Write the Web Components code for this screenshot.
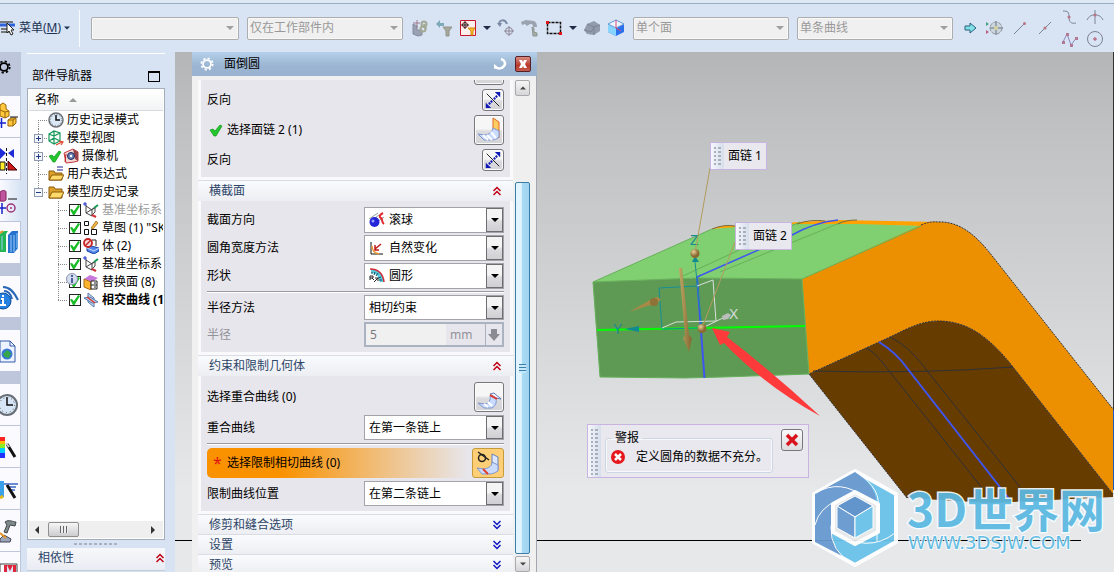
<!DOCTYPE html>
<html lang="zh-CN">
<head>
<meta charset="utf-8">
<title>面倒圆</title>
<style>
    html, body { height: 100%; }
    body {
        margin: 0;
        overflow: hidden;
        font: 12px/18px "Noto Sans", "Noto Sans CJK SC", sans-serif;
        color: #000;
        background: #d7e3f3;
    }
</style>
</head>
<body>
<nx-app></nx-app>
<script>
(function() {
    const ICONS = {
        menu: ['0 0 16 16', '<path d="M0 2h13M1 9h12M1 12h9" stroke="#555" stroke-width="1.5"/><path d="M0 5h15" stroke="#2e63dc" stroke-width="3"/><path d="M7 3v10l2-2 2 4 2-1-2-4h3z" fill="#fff" stroke="#222"/>'],
        caret: ['0 0 8 8', '<path d="M0 2h8L4 6z" fill="currentColor"/>'],
        link: ['0 0 18 18', '<path d="M2 5l4 2v4h5v5l-4 1-5-2z" fill="#9aa1b2" stroke="#858ca0"/><path d="M6 1v8M2 4h7" stroke="#a07d90"/><g fill="none" stroke="#a3a895" stroke-width="2"><circle cx="13" cy="5" r="2.5"/><circle cx="12" cy="10" r="2.5"/><path d="M13 5l2 5"/></g>'],
        filter: ['0 0 18 18', '<path d="M1 5l4-4v3h4v3H5v2z" fill="#7daab9"/><path d="M8 8h9l-3 4v5h-3v-5z" fill="#a6a79b" stroke="#93958d"/>'],
        snap: ['0 0 18 18', '<path d="M1.500 1.500h15v15h-15z" fill="#fbf0ee" stroke="#c9142b"/><circle cx="6" cy="6" r="2.500" fill="none" stroke="#711"/><path d="M2 6h8M6 2v8" stroke="#222"/><path d="M9 9h7l-2 3v4h-2v-4z" fill="#ffbd2e" stroke="#d48b0c"/>'],
        orbit: ['0 0 18 18', '<path d="M2 6C2 0 8 0 10 5" fill="none" stroke="#7b8ba5" stroke-width="2"/><path d="M0 4l3 4 2-4z" fill="#7b8ba5"/><circle cx="12" cy="12" r="3.500" fill="none" stroke="#8d8796"/><path d="M7 12h10M12 7v10" stroke="#8d8796"/>'],
        pull: ['0 0 18 18', '<path d="M0 3l5-2 8 1c2 1 3 3 3 6h-4c0-3-1-3-3-3L6 7 4 5 1 6z" fill="#9aa3af"/><path d="M11 8l2 1v4l3 1v3h-4z" fill="#a5ab9e" stroke="#8d9795"/>'],
        marquee: ['0 0 18 18', '<path d="M2.500 3.500h13v11h-13z" fill="none" stroke="#111" stroke-width="1.500" stroke-dasharray="3 1"/><path d="M1 2h3v3H1zM14 13h3v3h-3z" fill="#e31717"/>'],
        face: ['0 0 18 18', '<path d="M1 11l3-6 7-3 6 4v6l-6 4-7-1z" fill="#929baa"/><path d="M4 5l7 3 6-2M11 8v8M1 11l7 2 3-5" fill="none" stroke="#7c8596"/>'],
        cube: ['0 0 18 18', '<path d="M9 1l8 4v8l-8 4-8-4V5z" fill="#2b71ee"/><path d="M1 5l8 4v8l-8-4z" fill="#87d4ff"/><path d="M9 1l8 4-8 4-8-4z" fill="#edf6ff" stroke="#6b9ed2"/><path d="M9 9V1M9 9l5 3" stroke="#d5467a" fill="none"/>'],
        arrow: ['0 0 18 18', '<path d="M4 7h5V4l6 5-6 5v-3H4z" fill="#80e2e6" stroke="#28617f"/>'],
        wheel: ['0 0 18 18', '<circle cx="10" cy="9" r="6" fill="#cbd6dc" stroke="#8b93a0" stroke-dasharray="4 1"/><path d="M10 2v14M4 9h13" stroke="#8b93a0" stroke-width="1.500"/><circle cx="10" cy="9" r="2" fill="#d5d39d"/><path d="M0 3v4l3-2z" fill="#48a07d"/><path d="M0 11v4l3-2z" fill="#c06080"/>'],
        endpoint: ['0 0 18 18', '<path d="M3 15L13 5" stroke="#7b8494"/><circle cx="13.500" cy="4.500" r="1.500" fill="#b87484"/>'],
        midpoint: ['0 0 18 18', '<path d="M3 15L15 3" stroke="#7b8494"/><circle cx="9" cy="9" r="1.500" fill="#b87484"/>'],
        curve: ['0 0 18 18', '<path d="M2 3c5 0 6 1 6 6s2 7 7 6" fill="none" stroke="#7b8494"/><circle cx="8" cy="9" r="1.500" fill="#b87484"/>'],
        spline: ['0 0 18 18', '<path d="M2 12L6 4l4 11 6-8" fill="none" stroke="#8c87bd"/><path d="M1 11h3v3H1zM5 3h3v3H5zM9 14h3v3H9zM14 7h3v3h-3z" fill="#b07a94"/>'],
        cross: ['0 0 18 18', '<path d="M9 2v14M1 12c3-7 13-7 16 0" fill="none" stroke="#7b8494"/><circle cx="9" cy="7" r="1.500" fill="#b87484"/>'],
        center: ['0 0 18 18', '<circle cx="9" cy="9" r="7.500" fill="none" stroke="#7b8494"/><path d="M7 9h4M9 7v4" stroke="#b05268"/>'],
        gear: ['0 0 16 16', '<circle cx="8" cy="8" r="6.500" fill="none" stroke="currentColor" stroke-width="2" stroke-dasharray="2.550 2.550"/><circle cx="8" cy="8" r="4.500" fill="none" stroke="currentColor" stroke-width="2"/>'],
        reset: ['0 0 14 14', '<path d="M8 2c4 1 5 5 3 7-2 3-6 3-9 1" fill="none" stroke="#fff" stroke-width="2.500"/><path d="M1 7v5l4-2z" fill="#fff"/>'],
        close: ['0 0 14 14', '<path d="M3 3h3l1 2 1-2h3L9 7l2 4H8L7 9l-1 2H3l2-4z" fill="#fff"/>'],
        flip: ['0 0 20 20', '<path d="M3 3l14 14" stroke="#111"/><path d="M11 9l4-4M9 11l-4 4" stroke="#1019b5" stroke-width="2.500" stroke-dasharray="2 1"/><path d="M18 1v6l-6-6zM2 19v-6l6 6z" fill="#1019b5"/>'],
        chain: ['0 0 28 28', '<path d="M18 2l6 4v16l-6-5z" fill="#fccb62" stroke="#dd6a22"/><path d="M3 18l7 1c5-1 7-3 8-7l6 3v6c-3 3-6 3-9 3H9z" fill="#c9dbff" stroke="#7f95cc"/><path d="M8 19l5 5M12 19l5 5M16 16l5 6" stroke="#fff" stroke-width="2"/>'],
        coincide: ['0 0 28 28', '<path d="M3 20l7 1c4-1 6-4 5-8l6 3c1 4-1 7-4 9H9z" fill="#c9dbff" stroke="#7f95cc"/><path d="M9 21l4 3M13 19l4 4" stroke="#fff" stroke-width="2"/><path d="M15 11l4-1 7 6-5-1z" fill="#eef3ff" stroke="#667fba"/><path d="M15 12l7 4" stroke="#e6392d" stroke-width="2"/>'],
        tangent: ['0 0 28 28', '<path d="M18 5l6 3v13l-6-4z" fill="#dce8ff" stroke="#667fba"/><path d="M3 19l7 1c5-1 8-3 8-7l6 3v6c-3 2-6 3-9 3H8z" fill="#c9dbff" stroke="#7f95cc"/><path d="M9 20l5 5" stroke="#e43b2b" stroke-width="2"/><circle cx="8" cy="9" r="3.500" fill="none" stroke="#222" stroke-width="1.500"/><path d="M4 3l11 8" stroke="#222" stroke-width="1.500"/>'],
        ball: ['0 0 16 16', '<path d="M0 7l9-6M8 10l7-5M2 9l8-6" stroke="#90a0a0"/><path d="M14 1c-4 2-4 4-2 5s0 4 3 6" fill="none" stroke="#e02a2f" stroke-width="2"/><circle cx="5.500" cy="10" r="5" fill="#2424d8"/><circle cx="4" cy="9" r="1.500" fill="#98a6ff"/>'],
        natural: ['0 0 16 16', '<path d="M2 2v12h12" fill="none" stroke="#111"/><path d="M3 6c0 5 3 7 7 8" fill="none" stroke="#ef9a32" stroke-width="1.500"/><path d="M12 4L6 9M6 5v5h4" fill="none" stroke="#c01919" stroke-width="1.500"/>'],
        arc: ['0 0 16 16', '<path d="M2 3c7 0 10 4 11 11" fill="none" stroke="#55c9da" stroke-width="4"/><path d="M1 1c9 0 13 5 14 13" fill="none" stroke="#d12d39" stroke-width="1.500"/><path d="M2 5h2M6 4l-1 3M9 5L7 8M12 9l-3 1M13 12h-3" stroke="#154f68"/><path d="M1 12V8h3v2H1M3 10l2 2M5 14l4-4M6 10h3v3" fill="none" stroke="#222"/>'],
        down: ['0 0 12 12', '<path d="M3 0h6v5h3l-6 7-6-7h3z" fill="#8b8b94"/>'],
        tick: ['0 0 14 14', '<path d="M1 7l3-1 2 2 5-6 2 1-6 10H5z" fill="#22c72c" stroke="#11931b" stroke-width=".7"/>'],
        chevrons: ['0 0 10 10', '<path d="M1.500 5L5 1.500 8.500 5M1.500 9L5 5.500 8.500 9" fill="none" stroke="currentColor" stroke-width="1.500"/>'],
        clock: ['0 0 16 16', '<circle cx="8" cy="8" r="7" fill="#dce9f7" stroke="#6a6f76" stroke-width="1.500"/><path d="M8 3v5h4" fill="none" stroke="#111" stroke-width="1.500"/><circle cx="8" cy="8" r="5.500" fill="none" stroke="#777" stroke-dasharray="1 1.880"/>'],
        views: ['0 0 16 16', '<path d="M1 4l5-3 6 2v8l-6 3-5-3zM1 4l5 2 6-3M6 1v13M1 11l5-3 6 3" fill="none" stroke="#16985b" stroke-width="1.200"/><path d="M8 15l6-3M11 11l4 1-2 3" fill="none" stroke="#e6442c" stroke-width="1.200"/>'],
        camera: ['0 0 16 16', '<path d="M1 5l9-4 5 3v9l-4 1-8 1z" fill="#f6d8d8" stroke="#c63838"/><path d="M10 1l5 3v9l-3-2z" fill="#99434c"/><circle cx="8" cy="8" r="3.500" fill="#697fb7" stroke="#222a55"/><circle cx="8" cy="8" r="1.200" fill="#fff"/><path d="M2 14l1-8" stroke="#b22"/>'],
        folder: ['0 0 16 16', '<path d="M1 3h5l1 2h7v9H1z" fill="#dca129" stroke="#8a5a0b"/><path d="M4 8h12l-3 6H1z" fill="#ffd96a" stroke="#8a5a0b"/>'],
        expr: ['0 0 16 16', '<path d="M1 5h5l1 2h7v7H1z" fill="#dca129" stroke="#8a5a0b"/><path d="M4 9h12l-3 5H1z" fill="#ffd96a" stroke="#8a5a0b"/><path d="M9 1h6M9 4h6" stroke="#1c1c90"/>'],
        csys: ['0 0 16 16', '<path d="M3 3v8l6 3V8L3 4M3 11l8-5M8 8l4-2v4l-4 4" fill="none" stroke="#444"/><path d="M2 0v4M0 2h4" stroke="#2230d0"/><path d="M11 6l4-3" stroke="#1a9955" stroke-width="2"/><path d="M9 13l4 2" stroke="#d22d38" stroke-width="2"/>'],
        sketch: ['0 0 16 16', '<path d="M1.500 1.500h4v4h-4zM1.500 9.500h4v5h-4zM8.500 9.500h5v5h-5z" fill="#fff" stroke="#111"/><path d="M8 8l5-7 2 2-5 6z" fill="#f3b53e" stroke="#8b5b16" stroke-width=".7"/>'],
        body: ['0 0 16 16', '<path d="M4 10l4-2 8 2v3l-5 3-7-3z" fill="#4f86ed" stroke="#1d3fa3"/><path d="M4 10l7 3 5-3" fill="none" stroke="#cde"/><path d="M9 2h4v6" fill="none" stroke="#222"/><circle cx="5" cy="5" r="4" fill="#f5d9d9" stroke="#c52525" stroke-width="1.800"/><path d="M2 8l6-6" stroke="#c52525" stroke-width="1.500"/>'],
        replace: ['0 0 16 16', '<path d="M1 5l6-4 8 3-6 4z" fill="#c777d9"/><path d="M1 5l7 3v8l-7-3z" fill="#ffb42e" stroke="#ad6d16"/><path d="M8 7h6v8H8z" fill="#fff" stroke="#222"/><path d="M8 11h6M11 9h2M11 13h2" stroke="#222"/>'],
        intersect: ['0 0 16 16', '<path d="M5 1l6 5v9l-6-5z" fill="#c6d8f0" stroke="#5379ac"/><path d="M1 6l6-1 8 5-6 1z" fill="#b8d0ef" stroke="#5379ac"/><path d="M4 5l8 6" stroke="#e13a30" stroke-width="1.500"/>'],
        info: ['0 0 12 12', '<circle cx="6" cy="6" r="5.500" fill="#d4dcef" stroke="#8a94ac"/><path d="M6 2v2M6 5v5" stroke="#233379" stroke-width="1.500"/>'],
        error: ['0 0 16 16', '<circle cx="8" cy="8" r="7" fill="#e5171d"/><path d="M5 5l6 6M11 5l-6 6" stroke="#fff" stroke-width="2.500"/>'],
        redx: ['0 0 16 16', '<path d="M3 3l10 10M13 3L3 13" stroke="#d8141e" stroke-width="3.500"/>'],
        rBoxes: ['0 0 20 41', '<path d="M0 9l3-2 3 2v4l3 2v5l-4 2-5-2z" fill="#ffc83d" stroke="#98640a"/><path d="M0 14l5 2 4-1M5 16v6" fill="none" stroke="#98640a"/><path d="M8 24l3-2h5v5l-3 3H8z" fill="#ffc83d" stroke="#98640a"/><path d="M8 24h5l3-2M13 24v6" fill="none" stroke="#98640a"/><path d="M0 27h6M1.500 22v10" stroke="#1723cb" stroke-width="1.500"/><path d="M10 21h8" stroke="#111"/>'],
        rMirror: ['0 0 20 41', '<path d="M0 10l6 5-6 6zM14 11v9l-6-5z" fill="#1f2bd6"/><path d="M6.500 10v26" stroke="#111" stroke-dasharray="3 2"/><path d="M0 24h5v8H0z" fill="#ffec2b" stroke="#111"/><path d="M8 23v9h9z" fill="#cf1b1b" stroke="#400"/>'],
        rDatum: ['0 0 20 41', '<path d="M0 12c2-2 6-2 6 0v8c-2 2-6 1-6 1z" fill="#bf559c" stroke="#84235f"/><path d="M0 28h6M2 23v11" stroke="#1723cb" stroke-width="1.500"/><path d="M8 19h9" stroke="#111"/><circle cx="11" cy="28" r="4" fill="none" stroke="#9a347a" stroke-width="1.500"/><circle cx="11" cy="28" r="1" fill="#9a347a"/>'],
        rBooks: ['0 0 20 41', '<path d="M0 12l4-3h4l-2 3v18H0z" fill="#22b455"/><path d="M8 13l4-4h6v17l-4 5H8z" fill="#2672cf"/><path d="M11 13v17M14 13v17M2 14v14M17 11v15" stroke="#9bcdf5"/><path d="M0 11l3-2" stroke="#e8922a" stroke-width="2"/>'],
        rWifi: ['0 0 20 41', '<circle cx="3" cy="25" r="8" fill="#2481e2" stroke="#105099"/><path d="M3 19v2M1 23h2v6M0 29h6" stroke="#fff" stroke-width="2"/><path d="M4 15c5 0 7 4 8 8M3 11c7 0 11 5 15 13" fill="none" stroke="#2868b8" stroke-width="2"/>'],
        rPage: ['0 0 20 41', '<path d="M0 11h10l5 5v16H0z" fill="#edf4ff" stroke="#345aa9"/><path d="M10 11v5h5" fill="none" stroke="#345aa9"/><circle cx="7" cy="24" r="5.500" fill="#3978d2"/><path d="M3 24l4-4 4 3-2 5-4-1z" fill="#36a748"/>'],
        rClock: ['0 0 20 41', '<circle cx="7" cy="21" r="10" fill="#d7e5f6" stroke="#676d75" stroke-width="2"/><path d="M7 13v8h6" fill="none" stroke="#111" stroke-width="1.500"/><circle cx="7" cy="21" r="7.500" fill="none" stroke="#555" stroke-dasharray="1 2.930"/>'],
        rColor: ['0 0 20 41', '<path d="M0 11h5v5H0z" fill="#f22"/><path d="M0 15h5v4H0z" fill="#fb0"/><path d="M0 18h5v5H0z" fill="#8e2"/><path d="M0 22h5v5H0z" fill="#0cf"/><path d="M0 27h5v5H0z" fill="#23f"/><path d="M7 18l8 13" stroke="#111" stroke-width="3"/><path d="M6 17l3 4" stroke="#ccc" stroke-width="2"/>'],
        rTable: ['0 0 20 41', '<path d="M0 13h4v16H0z" fill="#3aa0e8"/><path d="M4 16h14M7 19h9M10 22h5" stroke="#3a67c4" stroke-width="1.500"/><path d="M7 17l8 13" stroke="#111" stroke-width="3"/><path d="M0 30l3-2" stroke="#e7b61c" stroke-width="3"/>'],
        rTool: ['0 0 20 41', '<path d="M5 12c4-3 8 0 11 0l-1 4-5-1-3 8-3-1 3-7z" fill="#7e8b8b" stroke="#444"/><path d="M0 29l4-4 7 4-1 3H0z" fill="#9aa6b8" stroke="#445"/><path d="M0 23l6 5" stroke="#e39421" stroke-width="2"/>'],
        rFrame: ['0 0 20 41', '<path d="M0 12h17v18H0z" fill="#fff" stroke="#444"/><path d="M4 13h12v16H4z" fill="#e0243a"/><path d="M7 13l3 6 3-6v16H7z" fill="#d8e8ff"/>']
    };

    function define(name, html, setup) {
        const tmpl = document.createElement('template');
        tmpl.innerHTML = '<style>* { box-sizing: border-box; }</style>' + html;
        customElements.define(name, class extends HTMLElement {
            constructor() {
                super();
                this.attachShadow({ mode: 'open' }).appendChild(tmpl.content.cloneNode(true));
            }
            connectedCallback() {
                if (setup) setup.call(this, this.shadowRoot);
            }
        });
    }

    // width and height come from whoever places the icon
    define('nx-icon', `
        <style>
            :host { display: block; flex: none; width: 16px; height: 16px; }
            svg { display: block; width: 100%; height: 100%; }
        </style>
        <svg aria-hidden="true"></svg>
    `, function(root) {
        const icon = ICONS[this.getAttribute('name')];
        const svg = root.querySelector('svg');
        svg.setAttribute('viewBox', icon[0]);
        svg.innerHTML = icon[1];
    });

    define('tool-combo', `
        <style>
            :host { display: grid; flex: 0 1 156px; height: 23px; align-items: center; color: #a0a0a0; }
            select, nx-icon { grid-area: 1 / 1; }
            select {
                appearance: none; width: 100%; height: 23px; padding: 0 2px;
                border: 1px solid #adadad; border-radius: 2px; background: #f0f0f0;
                box-shadow: inset 0 0 0 1px #f8f8f8;
                font: inherit; color: #999; opacity: 1;
            }
            nx-icon { justify-self: end; width: 8px; height: 8px; margin-right: 5px; pointer-events: none; }
        </style>
        <select disabled><option></option></select>
        <nx-icon name="caret"></nx-icon>
    `, function(root) {
        root.querySelector('option').textContent = this.getAttribute('value') || '';
        root.querySelector('select').setAttribute('aria-label', this.getAttribute('label'));
    });

    define('tool-bar', `
        <style>
            :host {
                display: flex; align-items: center; flex: none; height: 52px; padding-top: 4px;
                background: linear-gradient(#dfe9f6 3px, #9aabc6 3px, #9aabc6 4px, #d8e3f3 4px);
            }
            button { font: inherit; color: inherit; border: 0; padding: 0; background: none; }
            .menu { display: flex; align-items: center; gap: 3px; width: 72px; flex: none; color: #1c3354; white-space: nowrap; }
            .menu nx-icon:last-child { width: 6px; height: 6px; }
            .sep { width: 1px; height: 37px; margin: 0 11px 0 7px; background: #f8fbff; flex: none; }
            .icons { display: flex; align-items: center; gap: 6px; margin: 0 8px; flex: none; }
            .icons button > nx-icon { width: 18px; height: 18px; }
            .icons > nx-icon { width: 8px; height: 8px; color: #222c48; }
            .points { gap: 7px; }
            .stack { display: grid; gap: 4px; }
            .first { flex-basis: 148px; margin-right: 8px; }
        </style>
        <button class="menu"><nx-icon name="menu"></nx-icon><span>菜单(<u>M</u>)</span><nx-icon name="caret"></nx-icon></button>
        <span class="sep"></span>
        <tool-combo class="first" label="类型过滤器"></tool-combo>
        <tool-combo label="选择范围" value="仅在工作部件内"></tool-combo>
        <div class="icons">
            <button><nx-icon name="link"></nx-icon></button>
            <button><nx-icon name="filter"></nx-icon></button>
            <button><nx-icon name="snap"></nx-icon></button>
            <nx-icon name="caret"></nx-icon>
            <button><nx-icon name="orbit"></nx-icon></button>
            <button><nx-icon name="pull"></nx-icon></button>
            <button><nx-icon name="marquee"></nx-icon></button>
            <nx-icon name="caret"></nx-icon>
            <button><nx-icon name="face"></nx-icon></button>
            <button><nx-icon name="cube"></nx-icon></button>
        </div>
        <tool-combo label="面规则" value="单个面" style="margin-right: 8px"></tool-combo>
        <tool-combo label="曲线规则" value="单条曲线"></tool-combo>
        <div class="icons points">
            <button><nx-icon name="arrow"></nx-icon></button>
            <button><nx-icon name="wheel"></nx-icon></button>
            <button><nx-icon name="endpoint"></nx-icon></button>
            <button><nx-icon name="midpoint"></nx-icon></button>
            <div class="stack">
                <button><nx-icon name="curve"></nx-icon></button>
                <button><nx-icon name="spline"></nx-icon></button>
            </div>
            <div class="stack">
                <button><nx-icon name="cross"></nx-icon></button>
                <button><nx-icon name="center"></nx-icon></button>
            </div>
        </div>
    `);

    define('resource-rail', `
        <style>
            :host { display: flex; flex-direction: column; flex: none; width: 21px; background: #bdc6db; overflow: hidden; }
            .gear { width: 14px; height: 14px; margin: 8px 0 22px -3px; }
            button {
                flex: none; width: 20px; height: 41px; margin-bottom: 1px; padding: 0; border: 0; background: #fafaff;
            }
            .active { background: linear-gradient(90deg, #fafaff, #d7e3f3); width: 21px; }
            .apart { margin-bottom: 13px; }
            button nx-icon { width: 20px; height: 41px; }
        </style>
        <nx-icon class="gear" name="gear"></nx-icon>
        <button><nx-icon name="rBoxes"></nx-icon></button>
        <button><nx-icon name="rMirror"></nx-icon></button>
        <button class="active"><nx-icon name="rDatum"></nx-icon></button>
        <button class="apart"><nx-icon name="rBooks"></nx-icon></button>
        <button class="apart"><nx-icon name="rWifi"></nx-icon></button>
        <button class="apart"><nx-icon name="rPage"></nx-icon></button>
        <button><nx-icon name="rClock"></nx-icon></button>
        <button><nx-icon name="rColor"></nx-icon></button>
        <button><nx-icon name="rTable"></nx-icon></button>
        <button><nx-icon name="rTool"></nx-icon></button>
        <button><nx-icon name="rFrame"></nx-icon></button>
    `);

    define('tree-row', `
        <style>
            :host { display: flex; align-items: center; height: 18px; white-space: nowrap; }
            :host([child]) { padding-left: 20px; }
            :host([dim]) { color: #9c9c9c; }
            :host([bold]) { font-weight: bold; }
            .guide { flex: none; width: 20px; height: 18px; }
            label { display: flex; align-items: center; }
            .icon { margin-right: 3px; }
            .pre { margin-right: 1px; width: 14px; height: 14px; }
            input {
                appearance: none; display: grid; place-items: center; flex: none;
                width: 12px; height: 12px; margin: 0 2px 0 1px; border: 1px solid #222; background: #fff;
            }
            input::before {
                content: ""; width: 10px; height: 10px; background: #18bd25;
                clip-path: polygon(0 45%, 20% 40%, 38% 62%, 82% 0, 100% 10%, 45% 100%, 30% 100%);
            }
            .info { width: 12px; height: 12px; margin: -6px -10px 0 -2px; z-index: 1; }
        </style>
        <svg class="guide" aria-hidden="true"></svg>
        <label></label>
    `, function(root) {
        const mark = this.getAttribute('mark');
        const end = this.getAttribute('end');
        const from = end === 'top' ? 9 : 0;
        const to = end === 'bottom' ? 9 : 18;
        let guide = `<path d="M10.500 ${from}V${to}M10 9.500H20" stroke="#888" stroke-dasharray="1 1"/>`;
        if (mark) {
            guide += '<rect x="6.500" y="5.500" width="8" height="8" fill="#f4f6fa" stroke="#8f9bb0"/>'
                + `<path d="M8 9.500h5${mark === 'plus' ? 'M10.500 7v5' : ''}" stroke="#223b88"/>`;
        }
        root.querySelector('svg').innerHTML = guide;
        root.querySelector('label').innerHTML =
            (this.hasAttribute('info') ? '<nx-icon class="info" name="info"></nx-icon>' : '')
            + (this.hasAttribute('child') ? '<input type="checkbox" checked>' : '')
            + (this.hasAttribute('tick') ? '<nx-icon class="pre" name="tick"></nx-icon>' : '')
            + `<nx-icon class="icon" name="${this.getAttribute('icon')}"></nx-icon><span>${this.getAttribute('text')}</span>`;
    });

    define('part-navigator', `
        <style>
            :host {
                display: flex; flex-direction: column; flex: none; width: 154px;
                padding: 1px 10px 0 6px; background: #d7e3f3; overflow: hidden;
            }
            header { display: flex; align-items: center; justify-content: space-between; height: 35px; flex: none;
                padding: 10px 5px 0; border-top: 1px solid #fff; }
            .max { width: 12px; height: 11px; padding: 0; border: 1px solid #000; border-top-width: 2px; background: none; }
            .tree { display: flex; flex-direction: column; flex: 1; min-height: 0; border: 1px solid #a5adb8; background: #fff; padding: 1px; overflow: hidden; }
            .head { display: flex; align-items: center; gap: 10px; height: 21px; flex: none; padding-left: 6px;
                background: linear-gradient(#fff, #f2f3f5); border-bottom: 1px solid #d8dade; }
            .head i { border: 4px solid transparent; border-top: 0; border-bottom-color: #999; }
            .rows { flex: 1; overflow: hidden; margin-left: -1px; }
            .scroll { display: flex; align-items: center; height: 17px; flex: none; background: #efefef; padding: 0 8px 0 6px; }
            .scroll b { width: 31px; height: 15px; margin: 0 auto 0 9px; border: 1px solid #8f8f8f; border-radius: 2px;
                background: repeating-linear-gradient(90deg, #666 0 1px, #eee 1px 3px) center / 8px 7px no-repeat, linear-gradient(#f6f6f6, #cdcdd0); }
            .scroll i { border: 4px solid transparent; border-left: 0; border-right-color: #333; }
            .scroll i + b + i { border-left: 4px solid #333; border-right: 0; }
            .grip { height: 2px; width: 44px; margin: 3px auto; flex: none;
                background: repeating-linear-gradient(90deg, #aab2c2 0 3px, transparent 3px 5px); }
            .more { display: flex; align-items: center; justify-content: space-between; height: 23px; flex: none;
                padding: 0 0 3px 11px; border: 0; border-bottom: 1px solid #c5ccd8; margin-bottom: 1px;
                background: linear-gradient(#f7f8fb, #e9ecf3); font: inherit; color: #2d4568; }
            .more nx-icon { width: 10px; height: 10px; color: #c00015; }
        </style>
        <header><span>部件导航器</span><button class="max" aria-label="最大化"></button></header>
        <div class="tree">
            <div class="head"><span>名称</span><i></i></div>
            <div class="rows">
                <tree-row end="top" icon="clock" text="历史记录模式"></tree-row>
                <tree-row mark="plus" icon="views" text="模型视图"></tree-row>
                <tree-row mark="plus" tick icon="camera" text="摄像机"></tree-row>
                <tree-row icon="expr" text="用户表达式"></tree-row>
                <tree-row mark="minus" end="bottom" icon="folder" text="模型历史记录"></tree-row>
                <tree-row child dim icon="csys" text="基准坐标系"></tree-row>
                <tree-row child icon="sketch" text='草图 (1) "SK'></tree-row>
                <tree-row child icon="body" text="体 (2)"></tree-row>
                <tree-row child icon="csys" text="基准坐标系"></tree-row>
                <tree-row child info icon="replace" text="替换面 (8)"></tree-row>
                <tree-row child bold end="bottom" icon="intersect" text="相交曲线 (1"></tree-row>
            </div>
            <div class="scroll"><i></i><b></b><i></i></div>
        </div>
        <div class="grip"></div>
        <button class="more"><span>相依性</span><nx-icon name="chevrons"></nx-icon></button>
    `);

    define('icon-button', `
        <style>
            :host { display: block; flex: none; }
            button {
                display: grid; place-items: center; width: 30px; height: 30px; padding: 0;
                border: 1px solid #77777c; border-radius: 3px;
                background: linear-gradient(#f6f6f6 45%, #dcdcdf 55%, #d4d4d8);
                box-shadow: inset 0 0 0 1px #fbfbfb;
            }
            nx-icon { width: 28px; height: 28px; }
            :host([small]) button { width: 22px; height: 22px; }
            :host([small]) nx-icon { width: 18px; height: 18px; }
            :host([hot]) button { width: 32px; border-color: #c79a3a; background: #ffcf78; box-shadow: none; }
        </style>
        <button></button>
    `, function(root) {
        root.querySelector('button').innerHTML = `<nx-icon name="${this.getAttribute('icon')}"></nx-icon>`;
    });

    define('action-row', `
        <style>
            :host { display: flex; align-items: center; justify-content: space-between; }
            span { display: flex; align-items: center; gap: 4px; }
            nx-icon { width: 14px; height: 14px; margin-left: 2px; }
            b { width: 16px; padding-left: 6px; font-size: 16px; font-weight: normal; color: #e01313; }
            :host([required]) { border-radius: 5px; background: linear-gradient(90deg, #fa9200 25%, #e7e6ec 88%); }
        </style>
        <span><slot name="mark"></slot><slot></slot></span>
        <slot name="button"></slot>
    `, function(root) {
        const mark = root.querySelector('slot[name=mark]');
        if (this.hasAttribute('tick')) mark.innerHTML = '<nx-icon name="tick"></nx-icon>';
        if (this.hasAttribute('required')) mark.innerHTML = '<b>*</b>';
    });

    define('field-row', `
        <style>
            :host { display: flex; align-items: center; justify-content: space-between; height: 25px; }
            :host([icon]) { height: 26px; }
            .box { display: grid; align-items: center; width: 140px; height: 100%; }
            select, .icon, .drop { grid-area: 1 / 1; }
            select { appearance: none; width: 100%; height: 100%; padding: 0 4px; border: 1px solid #a3a3a9;
                border-radius: 0; background: #fff; font: inherit; color: #000; }
            :host([icon]) select { padding-left: 24px; }
            .icon, .drop { pointer-events: none; }
            .icon { margin-left: 5px; }
            .drop { justify-self: end; display: grid; place-items: center; width: 17px; height: calc(100% - 2px); margin-right: 1px;
                border: 1px solid #6e6e72; background: linear-gradient(#f4f4f4 45%, #dcdcdf 55%, #d0d0d4); }
            .drop nx-icon { width: 8px; height: 8px; }
        </style>
        <label for="value"></label>
        <div class="box">
            <select id="value"><option></option></select>
            <span class="drop"><nx-icon name="caret"></nx-icon></span>
        </div>
    `, function(root) {
        root.querySelector('label').textContent = this.getAttribute('label');
        root.querySelector('option').textContent = this.getAttribute('value');
        if (this.hasAttribute('icon')) {
            root.querySelector('select').insertAdjacentHTML('afterend',
                `<nx-icon class="icon" name="${this.getAttribute('icon')}"></nx-icon>`);
        }
    });

    define('radius-row', `
        <style>
            :host { display: flex; align-items: center; justify-content: space-between; height: 25px; color: #92929a; }
            .box { display: flex; align-items: center; width: 140px; height: 100%; border: 2px solid #abb3c0; }
            input { width: 80px; height: 100%; padding: 0 4px; border: 0; background: #f0f0f0; font: inherit; color: #77777d; }
            .unit { flex: 1; padding-left: 4px; }
            button { display: grid; place-items: center; width: 17px; height: 100%; padding: 0; border: 0; border-left: 1px solid #abb3c0; background: #e7e6ec; }
            nx-icon { width: 12px; height: 12px; }
        </style>
        <label for="radius">半径</label>
        <div class="box">
            <input id="radius" value="5" disabled><span class="unit">mm</span>
            <button disabled><nx-icon name="down"></nx-icon></button>
        </div>
    `);

    define('dialog-section', `
        <style>
            :host { display: block; flex: none; background: #fafafc; }
            header { border-top: 1px solid #dadbe3; }
            header button {
                display: flex; align-items: center; justify-content: space-between; width: 100%; height: 19px;
                padding: 0 11px; border: 0; font: inherit; color: #2d4568;
                background: linear-gradient(#fafbfd, #eceef3);
            }
            nx-icon { width: 10px; height: 10px; color: #1017c0; transform: rotate(180deg); }
            :host([open]) header button { height: 20px; }
            :host([open]) nx-icon { color: #c00015; transform: none; }
            .content { display: none; flex-direction: column; gap: var(--row-gap, 2px); margin: 0 3px; padding: 6px 6px 5px;
                background: #e7e6ec; }
            :host([open]) .content { display: flex; }
            :host([open]) { padding-bottom: 3px; }
            :host(:not([heading])) header { display: none; }
            :host(:not([heading])) .content { padding-top: 0; padding-bottom: 6px; }
        </style>
        <header><button><span></span><nx-icon name="chevrons"></nx-icon></button></header>
        <div class="content"><slot></slot></div>
    `, function(root) {
        root.querySelector('header span').textContent = this.getAttribute('heading') || '';
    });

    define('scroll-bar', `
        <style>
            :host { display: flex; flex-direction: column; flex: none; width: 15px; background: #efefef; }
            span { display: grid; place-items: center; height: 16px; flex: none; border: 1px solid #a9a9ad; border-radius: 2px;
                background: linear-gradient(#f6f6f6, #d6d6d9); }
            nx-icon { width: 6px; height: 6px; color: #444; }
            .up { transform: rotate(180deg); }
            .thumb { flex: 1; min-height: 20px; margin: 86px 0 2px; border: 1px solid #3d7ea8; border-radius: 2px;
                background: repeating-linear-gradient(#3b7fa8 0 1px, #c5e9fb 1px 3px) center / 7px 9px no-repeat,
                    linear-gradient(90deg, #e2f4fd 40%, #a9dbf5 50%, #a0d3f0); }
        </style>
        <span><nx-icon class="up" name="caret"></nx-icon></span>
        <div class="thumb"></div>
        <span><nx-icon name="caret"></nx-icon></span>
    `);

    define('blend-dialog', `
        <style>
            :host { display: flex; flex-direction: column; width: 345px; height: 100%; margin-left: 17px;
                background: #f0f0f0; box-shadow: inset -1px 0 #a4a8ae; overflow: hidden; position: relative; }
            header { display: flex; align-items: center; height: 24px; flex: none; padding: 0 6px 0 8px;
                background: linear-gradient(#b5d0ea, #9ab4d1 60%, #9ab3d0); }
            header nx-icon { color: #fff; width: 14px; height: 14px; }
            header span { flex: 1; padding-left: 10px; }
            .close { display: grid; place-items: center; width: 16px; height: 16px; margin-left: 8px; padding: 0;
                border: 1px solid #55202a; border-radius: 2px; background: linear-gradient(#d98d80, #b8382c 60%, #c45a4a); }
            main { display: flex; flex: 1; min-height: 0; padding: 4px 7px 0 6px; gap: 2px; }
            .list { display: flex; flex-direction: column; flex: 1; overflow: hidden; }
            .cut { display: flex; justify-content: flex-end; align-items: flex-end; height: 5px; overflow: hidden; }
            hr { width: 100%; height: 2px; margin: 0; border: 0; border-top: 1px solid #9b9ba2; background: #fff; }
        </style>
        <header>
            <nx-icon name="gear"></nx-icon><span>面倒圆</span><nx-icon name="reset"></nx-icon>
            <button class="close" aria-label="关闭"><nx-icon name="close"></nx-icon></button>
        </header>
        <main>
            <div class="list">
                <dialog-section open style="--row-gap: 4px">
                    <div class="cut"><icon-button icon="caret"></icon-button></div>
                    <action-row>反向<icon-button slot="button" small icon="flip"></icon-button></action-row>
                    <action-row tick>选择面链 2 (1)<icon-button slot="button" icon="chain"></icon-button></action-row>
                    <action-row>反向<icon-button slot="button" small icon="flip"></icon-button></action-row>
                </dialog-section>
                <dialog-section open heading="横截面">
                    <field-row label="截面方向" icon="ball" value="滚球"></field-row>
                    <field-row label="圆角宽度方法" icon="natural" value="自然变化"></field-row>
                    <field-row label="形状" icon="arc" value="圆形"></field-row>
                    <hr>
                    <field-row label="半径方法" value="相切约束"></field-row>
                    <radius-row></radius-row>
                </dialog-section>
                <dialog-section open heading="约束和限制几何体" style="--row-gap: 3px">
                    <action-row>选择重合曲线 (0)<icon-button slot="button" icon="coincide"></icon-button></action-row>
                    <field-row label="重合曲线" value="在第一条链上"></field-row>
                    <hr>
                    <action-row required>选择限制相切曲线 (0)<icon-button slot="button" hot icon="tangent"></icon-button></action-row>
                    <field-row label="限制曲线位置" value="在第二条链上"></field-row>
                </dialog-section>
                <dialog-section heading="修剪和缝合选项"></dialog-section>
                <dialog-section heading="设置"></dialog-section>
                <dialog-section heading="预览"></dialog-section>
            </div>
            <scroll-bar></scroll-bar>
        </main>
    `);

    define('drag-tag', `
        <style>
            :host { display: flex; border: 1px solid #c9b3e0; background: #e9e8ee; white-space: nowrap; }
            .grip { width: 13px; flex: none; padding: 2px 1px 2px 3px; background: linear-gradient(90deg, #f6f7fb, #d5deeb); }
            .grip i { display: block; height: 100%;
                background: conic-gradient(#a9b0bd 25%, transparent 0) -3px 2px / 5px 4px; }
            .text { padding: 4px; }
        </style>
        <span class="grip"><i></i></span><div class="text"><slot></slot></div>
    `);

    define('alert-box', `
        <style>
            drag-tag { width: 222px; height: 54px; }
            .row { display: flex; align-items: flex-start; gap: 8px; }
            fieldset { display: flex; align-items: center; gap: 10px; width: 168px; height: 44px; margin: 0; padding: 0 4px 6px;
                border: 1px solid #ccd7e2; border-radius: 3px; box-shadow: inset 0 0 0 1px #f6f8fb; }
            legend { margin-left: 2px; padding: 0 3px; line-height: 18px; }
            button { display: grid; place-items: center; width: 22px; height: 22px; padding: 0; border: 1px solid #77777c;
                border-radius: 3px; background: linear-gradient(#fafafa, #dcdce0); }
        </style>
        <drag-tag><div class="row">
            <fieldset><legend>警报</legend><nx-icon name="error"></nx-icon><span>定义圆角的数据不充分。</span></fieldset>
            <button aria-label="关闭"><nx-icon name="redx"></nx-icon></button>
        </div></drag-tag>
    `);

    define('model-scene', `
        <style>
            :host { display: block; }
            svg { display: block; width: 100%; height: 100%; }
            .edge { fill: none; stroke: #303038; stroke-width: 1; }
            .soft { fill: none; stroke: #66b05a; stroke-width: 1; }
            .blue { fill: none; stroke: #3f55f0; stroke-width: 2; }
            .mark { font-family: "Noto Sans CJK SC", sans-serif; font-weight: 700; font-size: 46px; }
            .url { font-family: "DejaVu Sans", sans-serif; font-size: 18px; stroke-width: 2; }
            .axis { font-family: "Liberation Sans", sans-serif; font-size: 14px; }
        </style>
        <svg viewBox="175 52 939 520" preserveAspectRatio="xMinYMin slice">
            <defs>
                <linearGradient id="bg" x2="0" y2="1">
                    <stop offset="0" stop-color="#b4b5b6"/><stop offset=".15" stop-color="#c0c1c3"/><stop offset=".67" stop-color="#dddee0"/>
                    <stop offset=".85" stop-color="#e6e8ea"/><stop offset="1" stop-color="#e6e8ea"/>
                </linearGradient>
                <radialGradient id="bead" cx=".35" cy=".3"><stop offset="0" stop-color="#ecd09a"/><stop offset="1" stop-color="#8a6a31"/></radialGradient>
                <linearGradient id="cone"><stop offset="0" stop-color="#c2a865"/><stop offset="1" stop-color="#806630"/></linearGradient>
            </defs>
            <rect x="175" y="52" width="939" height="520" fill="url(#bg)"/>
            <path d="M175 540.500H1081" stroke="#000"/>
            <!-- bent plate -->
            <path d="M712 229Q720 225 735 226L800 222 840 220 938 222 921 226 800 224z" fill="#ffa200"/>
            <path d="M593 282L712 229 736 227 795 224 860 224 921 226 802 279 698 278z" fill="#80cf70"/>
            <path d="M593 282L698 278 802 279 809 374 723 377 685 378 600 377z" fill="#5f9a55"/>
            <path d="M802 279L921 225Q930 221 938 222C960 221 977 236 993 257L1113 409V494L1013 367C985 331 962 321 938 321 920 321 905 330 890 337L809 374z" fill="#ec8f00"/>
            <path d="M809 374L890 337C905 330 920 321 938 321 962 321 985 331 1013 367L1113 494V497L990 503 907 498z" fill="#663c00"/>
            <path class="edge" stroke-dasharray="2 1" d="M921 225Q930 221 938 222C960 221 977 236 993 257L1113 409M907 498L809 374 890 337C905 330 920 321 938 321 962 321 985 331 1013 367L1113 494"/>
            <path class="edge" d="M813 371Q920 374 1013 367M866 348C876 353 882 362 890 372L982 488M890 337C907 346 917 357 928 372L1020 487"/>
            <path class="soft" d="M712 229L593 282 698 278 802 279 921 226M593 282L600 377 685 378 723 377 809 374 802 279M683 276L800 222M720 272L842 222"/>
            <path d="M712 229Q724 224 735 226M797 224Q810 219 825 221M838 224Q845 220 857 220" fill="none" stroke="#7a6a3a"/>
            <path class="blue" d="M879 342C892 350 900 358 907 368L1010 500"/>
            <path d="M597 330L701 328 805 326" fill="none" stroke="#0f0" stroke-width="2"/>
            <path class="blue" d="M704.500 378L697 277"/>
            <path d="M697 277L790 236Q815 222 838 220" fill="none" stroke="#3f55f0" stroke-width="1.500"/>
            <!-- datum axes -->
            <path d="M697 286L659 288 662 329 701 328M695 262L702 328" fill="none" stroke="#178e96"/>
            <path d="M697 286L713 280 716 321 676 322 662 328M702 328L725 317" fill="none" stroke="#d9dfdb"/>
            <path d="M722 316l6-3 3 2-3 4-5 1z" fill="#bbbdbd"/>
            <path d="M625 329L639 326V332zM692 262L695 256 699 262z" fill="#118a90"/>
            <text class="axis" x="729" y="319" fill="#d5dcda">X</text>
            <text class="axis" x="613" y="334" fill="#168b91">Y</text>
            <text class="axis" x="690" y="245" fill="#168b91">Z</text>
            <path d="M710 168L695 253M735 242L702 328" stroke="#b39b5e"/>
            <path d="M629 312L650 300 657 297 661 299 657 304 647 306z" fill="#a98946"/>
            <circle cx="654" cy="302" r="4" fill="#8f7237"/>
            <path d="M679 268L682 268 689 335 692 338 689 352 683 338 685 335z" fill="url(#cone)"/>
            <circle cx="695" cy="253.500" r="4.500" fill="url(#bead)"/><circle cx="702" cy="328.500" r="4.500" fill="url(#bead)"/>
            <path d="M712 328L730 332 727 337Q775 374 820 416 765 386 724 343L720 345z" fill="#ff3a3a"/>
            <path d="M1113.500 52V410" stroke="#333"/><path d="M1113.500 410V490" stroke="#1c5ab8"/>
            <!-- site badge -->
            <g opacity=".95" stroke="#fff" stroke-linejoin="round">
                <path d="M855 471L896 494V542L855 565 814 542V494z" fill="#6ac3ea" stroke-width="4"/>
                <path d="M855 472L815 494V542L842 556Q830 541 833 532V506L855 493 876 505Q878 487 855 472z" fill="#6799d0" stroke="none"/>
                <path d="M816 493Q840 478 866 498M855 471Q884 490 877 511V541M895 533Q868 554 833 532M843 557Q826 541 833 515M815 525Q819 508 838 500" fill="none"/>
                <path d="M855 492L878 504V532L855 544 833 532V504z" fill="#e6e8ea" stroke="#fff" stroke-width="4"/>
                <path d="M855 496L873 506 855 517 837 506z" fill="#5d91cc"/>
                <path d="M837 506L855 517V538L837 528z" fill="#6799d0"/>
                <path d="M855 517L873 506V528L855 538z" fill="#6ac3ea"/>
            </g>
            <g fill="#5bb9e3" stroke="#f4fbff" stroke-width="3" paint-order="stroke" opacity=".93">
                <text class="mark" x="907" y="527">3D世界网</text>
                <text class="url" x="908" y="549">WWW.3DSJW.COM</text>
            </g>
        </svg>
    `);

    define('graphics-window', `
        <style>
            :host { display: block; position: relative; flex: 1; min-width: 0; overflow: hidden; }
            model-scene { position: absolute; inset: 0; }
            drag-tag, alert-box { position: absolute; }
            .one { left: 535px; top: 90px; }
            .two { left: 560px; top: 170px; }
            alert-box { left: 412px; top: 372px; }
        </style>
        <model-scene></model-scene>
        <blend-dialog></blend-dialog>
        <drag-tag class="one">面链 1</drag-tag>
        <drag-tag class="two">面链 2</drag-tag>
        <alert-box></alert-box>
    `);

    define('nx-app', `
        <style>
            :host { display: flex; flex-direction: column; height: 100vh; }
            .work { display: flex; flex: 1; min-height: 0; }
        </style>
        <tool-bar></tool-bar>
        <div class="work">
            <resource-rail></resource-rail>
            <part-navigator></part-navigator>
            <graphics-window></graphics-window>
        </div>
    `);
})();
</script>
</body>
</html>
